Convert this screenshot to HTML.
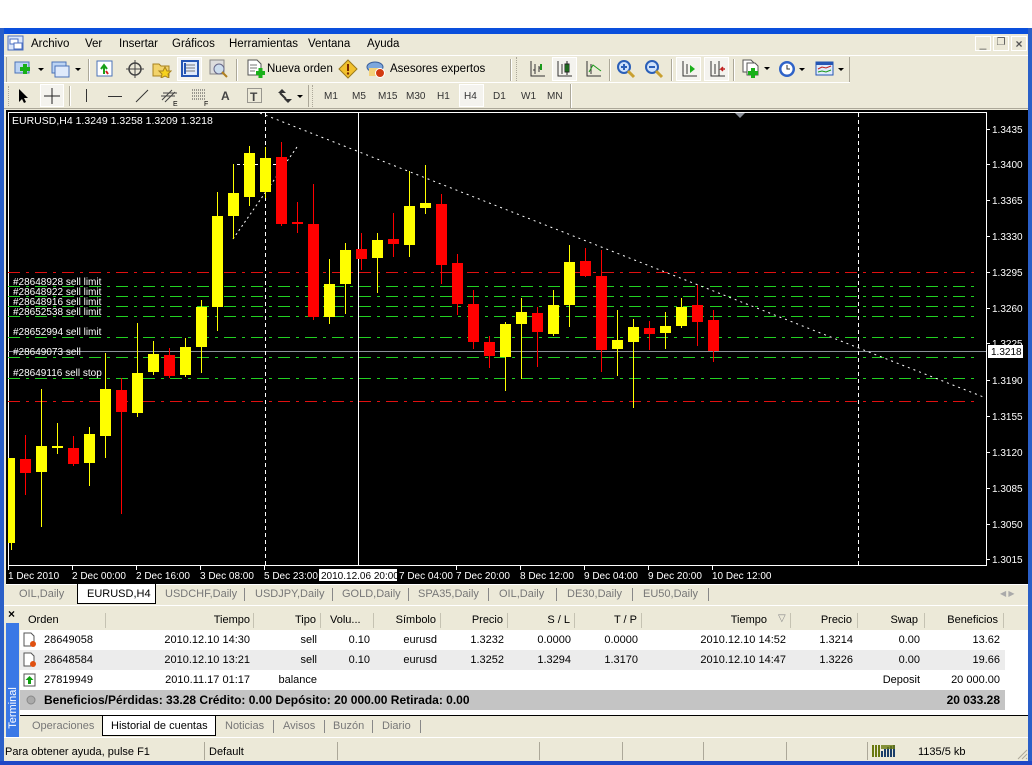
<!DOCTYPE html>
<html><head><meta charset="utf-8">
<style>
*{margin:0;padding:0;box-sizing:border-box}
body{width:1032px;height:765px;background:#fff;position:relative;overflow:hidden;font-family:"Liberation Sans","DejaVu Sans",sans-serif;font-size:11px;color:#000}
.a{position:absolute}
.bar{background:#ece9d8}
.t{position:absolute;white-space:nowrap}
.sep{position:absolute;width:2px;border-left:1px solid #aca899;border-right:1px solid #fff}
.r{text-align:right}
</style></head><body>
<!-- window frame -->
<div class="a" style="left:0;top:28px;width:1032px;height:6px;background:#0a4fdc"></div>
<div class="a" style="left:0;top:28px;width:4px;height:737px;background:#2a5fc8"></div>
<div class="a" style="left:1028px;top:28px;width:4px;height:737px;background:#2a5fc8"></div>
<div class="a" style="left:0;top:761px;width:1032px;height:4px;background:#1f47c6"></div>
<div class="a bar" style="left:4px;top:34px;width:1024px;height:727px"></div>

<!-- menu -->
<svg class="a" style="left:7px;top:35px" width="18" height="17"><rect x="1" y="1" width="15" height="14" fill="#dbe7fb" stroke="#4a6ec0"/><rect x="3" y="4" width="8" height="5" fill="#fff" stroke="#4a6ec0"/><rect x="7" y="8" width="8" height="6" fill="#fff" stroke="#4a6ec0"/></svg>
<div class="t" style="left:31px;top:38px;font-size:11.5px">Archivo</div>
<div class="t" style="left:85px;top:38px;font-size:11.5px">Ver</div>
<div class="t" style="left:119px;top:38px;font-size:11.5px">Insertar</div>
<div class="t" style="left:172px;top:38px;font-size:11.5px">Gráficos</div>
<div class="t" style="left:229px;top:38px;font-size:11.5px">Herramientas</div>
<div class="t" style="left:308px;top:38px;font-size:11.5px">Ventana</div>
<div class="t" style="left:367px;top:38px;font-size:11.5px">Ayuda</div>
<div class="a" style="left:975px;top:36px;width:16px;height:15px;border:1px solid #fff;font-size:12px;text-align:center;line-height:12px;color:#555">_</div>
<div class="a" style="left:993px;top:36px;width:16px;height:15px;border:1px solid #fff;font-size:10px;text-align:center;color:#555">❐</div>
<div class="a" style="left:1011px;top:36px;width:16px;height:15px;border:1px solid #fff;font-size:12px;text-align:center;line-height:14px;color:#555;font-weight:bold">×</div>
<div class="a" style="left:4px;top:55px;width:1024px;height:1px;background:#fff"></div>

<!-- toolbar row 1 -->
<div class="a" style="left:6px;top:57px;width:1px;height:25px;background:#aca899"></div>
<svg class="a" style="left:14px;top:60px" width="30" height="20"><rect x="1" y="2" width="14" height="11" fill="#bcd4f4" stroke="#4b73b9"/><path d="M6 9h10M11 4v10" stroke="#19b019" stroke-width="4"/><path d="M24 8l3 3 3-3z" fill="#000"/></svg>
<svg class="a" style="left:51px;top:60px" width="30" height="20"><rect x="1" y="2" width="14" height="11" fill="#bcd4f4" stroke="#4b73b9"/><rect x="4" y="6" width="14" height="11" fill="#dfeafb" stroke="#4b73b9"/><path d="M24 8l3 3 3-3z" fill="#000"/></svg>
<div class="sep" style="left:88px;top:59px;height:22px"></div>
<svg class="a" style="left:96px;top:60px" width="18" height="18"><rect x="1" y="1" width="15" height="15" fill="#fff" stroke="#4b73b9"/><path d="M5 9l3-4 3 4M8 6v8" stroke="#19a019" stroke-width="2" fill="none"/><path d="M10 11l2 3" stroke="#d02020" stroke-width="2"/></svg>
<svg class="a" style="left:126px;top:60px" width="18" height="18"><circle cx="9" cy="9" r="6" fill="none" stroke="#444" stroke-width="1.5"/><path d="M9 0v18M0 9h18" stroke="#444"/></svg>
<svg class="a" style="left:152px;top:59px" width="20" height="19"><path d="M1 5h6l2 2h8v10H1z" fill="#f2d36b" stroke="#a8821e"/><path d="M13 8l2 4 4 0-3 3 1 4-4-2-4 2 1-4-3-3h4z" fill="#f6d21c" stroke="#a8821e"/></svg>
<div class="a" style="left:177px;top:57px;width:25px;height:24px;border:1px solid #fff;background:#f4f3ee"></div>
<svg class="a" style="left:181px;top:60px" width="18" height="18"><rect x="1" y="1" width="16" height="15" fill="#dfeafb" stroke="#2455b4" stroke-width="2"/><path d="M5 5h9M5 8h9M5 11h9" stroke="#777"/><rect x="3" y="3" width="2" height="11" fill="#2455b4"/></svg>
<svg class="a" style="left:209px;top:59px" width="20" height="20"><rect x="1" y="1" width="14" height="14" fill="#ddd" stroke="#888"/><circle cx="10" cy="10" r="5" fill="#cde" stroke="#668"/><path d="M13 13l5 5" stroke="#b08020" stroke-width="2"/></svg>
<div class="sep" style="left:236px;top:59px;height:22px"></div>
<svg class="a" style="left:246px;top:59px" width="20" height="21"><path d="M2 1h9l4 4v11H2z" fill="#fff" stroke="#555"/><path d="M4 6h7M4 9h7M4 12h5" stroke="#777"/><path d="M10 14h9M14.5 9v10" stroke="#19b019" stroke-width="4"/></svg>
<div class="t" style="left:267px;top:63px;font-size:11.5px">Nueva orden</div>
<svg class="a" style="left:338px;top:59px" width="20" height="20"><path d="M10 1l9 9-9 9-9-9z" fill="#f2c12e" stroke="#9b7a18"/><path d="M10 5v7" stroke="#7a2a00" stroke-width="2"/><circle cx="10" cy="14.5" r="1.2" fill="#7a2a00"/></svg>
<svg class="a" style="left:366px;top:59px" width="20" height="20"><ellipse cx="9" cy="8" rx="8" ry="5" fill="#7da7dc" stroke="#3a5e9a"/><rect x="3" y="9" width="12" height="8" fill="#f3d27a"/><circle cx="14" cy="14" r="4.5" fill="#d23a10" stroke="#fff"/></svg>
<div class="t" style="left:390px;top:63px;font-size:11.5px">Asesores expertos</div>
<div class="sep" style="left:510px;top:59px;height:22px"></div>
<div class="a" style="left:516px;top:57px;width:2px;height:24px;border-left:1px dotted #aca899"></div>
<svg class="a" style="left:528px;top:60px" width="18" height="18"><path d="M3 1v15h14M7 4v10M11 6v6M11 8h3M7 10h-2" stroke="#333" fill="none"/><path d="M13 4v6" stroke="#1a9a1a" stroke-width="2"/></svg>
<div class="a" style="left:552px;top:57px;width:25px;height:24px;border:1px solid #fff;background:#f4f3ee"></div>
<svg class="a" style="left:555px;top:60px" width="18" height="18"><path d="M3 1v15h14M7 4v10" stroke="#333" fill="none"/><rect x="10" y="4" width="4" height="8" fill="#1cb01c" stroke="#222"/><path d="M12 1v14" stroke="#222"/></svg>
<svg class="a" style="left:584px;top:60px" width="18" height="18"><path d="M3 1v15h14M7 4v10" stroke="#333" fill="none"/><path d="M5 12l4-7 4 3 4 3" stroke="#1a9a1a" fill="none"/></svg>
<div class="sep" style="left:609px;top:59px;height:22px"></div>
<svg class="a" style="left:616px;top:59px" width="20" height="20"><circle cx="8" cy="8" r="6" fill="#cfe2fb" stroke="#2a5fb8" stroke-width="2"/><path d="M5 8h6M8 5v6" stroke="#2a5fb8" stroke-width="2"/><path d="M12 12l6 6" stroke="#c9a030" stroke-width="3"/></svg>
<svg class="a" style="left:644px;top:59px" width="20" height="20"><circle cx="8" cy="8" r="6" fill="#cfe2fb" stroke="#2a5fb8" stroke-width="2"/><path d="M5 8h6" stroke="#2a5fb8" stroke-width="2"/><path d="M12 12l6 6" stroke="#c9a030" stroke-width="3"/></svg>
<div class="sep" style="left:671px;top:59px;height:22px"></div>
<div class="a" style="left:676px;top:57px;width:25px;height:24px;border:1px solid #fff;background:#f4f3ee"></div>
<svg class="a" style="left:680px;top:60px" width="18" height="18"><path d="M3 1v15h14M7 4v10" stroke="#333" fill="none"/><path d="M10 5l5 4-5 4z" fill="#1cb01c"/></svg>
<div class="a" style="left:704px;top:57px;width:25px;height:24px;border:1px solid #fff;background:#f4f3ee"></div>
<svg class="a" style="left:708px;top:60px" width="18" height="18"><path d="M3 1v15h14M7 4v10M11 1v15" stroke="#333" fill="none"/><path d="M17 9h-4l2-2M13 9l2 2" stroke="#c02020" stroke-width="1.5" fill="none"/></svg>
<div class="sep" style="left:733px;top:59px;height:22px"></div>
<svg class="a" style="left:741px;top:59px" width="30" height="21"><path d="M2 1h8l3 3v9H2z" fill="#fff" stroke="#555"/><path d="M6 4h8l3 3v9H6z" fill="#fff" stroke="#555"/><path d="M7 14h10M12 9v10" stroke="#19b019" stroke-width="4"/><path d="M23 8l3 3 3-3z" fill="#000"/></svg>
<svg class="a" style="left:778px;top:59px" width="30" height="20"><circle cx="9" cy="10" r="8" fill="#2f63c8"/><circle cx="9" cy="10" r="5.5" fill="#fff"/><path d="M9 6v4h3" stroke="#333" fill="none"/><path d="M21 9l3 3 3-3z" fill="#000"/></svg>
<svg class="a" style="left:815px;top:59px" width="30" height="20"><rect x="1" y="3" width="17" height="13" fill="#dfeafb" stroke="#2455b4"/><rect x="1" y="3" width="17" height="3" fill="#2455b4"/><path d="M3 10l4-2 4 1 5-2" stroke="#c02020" fill="none"/><path d="M3 13l4-1 4 1 5-2" stroke="#1a9a1a" fill="none"/><path d="M23 9l3 3 3-3z" fill="#000"/></svg>
<div class="a" style="left:849px;top:57px;width:1px;height:26px;background:#aca899"></div>
<div class="a" style="left:4px;top:82px;width:846px;height:1px;background:#fff"></div>

<!-- toolbar row 2 -->
<div class="a" style="left:8px;top:86px;width:2px;height:20px;border-left:1px dotted #aca899"></div>
<svg class="a" style="left:16px;top:88px" width="14" height="16"><path d="M3 1v13l3-3 2 4 2-1-2-4h4z" fill="#000"/></svg>
<div class="a" style="left:40px;top:84px;width:24px;height:23px;border:1px solid #fff;background:#f4f3ee"></div>
<svg class="a" style="left:42px;top:86px" width="20" height="20"><path d="M10 2v16M2 10h16" stroke="#222"/></svg>
<div class="sep" style="left:69px;top:86px;height:20px"></div>
<div class="a" style="left:86px;top:89px;width:1px;height:13px;background:#333"></div>
<div class="a" style="left:108px;top:96px;width:14px;height:1px;background:#333"></div>
<svg class="a" style="left:134px;top:88px" width="16" height="16"><path d="M2 14L14 2" stroke="#333"/></svg>
<svg class="a" style="left:160px;top:87px" width="20" height="20"><path d="M2 13l10-10M5 15l10-10M1 9h14M3 6h14" stroke="#444"/><text x="13" y="19" font-size="7" font-family="Liberation Sans">E</text></svg>
<svg class="a" style="left:191px;top:87px" width="20" height="20"><path d="M1 3h14M1 6h14M1 9h14M1 12h14" stroke="#444" stroke-dasharray="1,1"/><text x="13" y="19" font-size="7" font-family="Liberation Sans">F</text></svg>
<div class="t" style="left:221px;top:89px;font-size:12px;font-weight:bold;color:#444">A</div>
<svg class="a" style="left:246px;top:87px" width="18" height="18"><rect x="1.5" y="1.5" width="14" height="14" fill="none" stroke="#444" stroke-dasharray="1,1"/><text x="4" y="14" font-size="12" font-weight="bold" font-family="Liberation Sans" fill="#444">T</text></svg>
<svg class="a" style="left:276px;top:88px" width="28" height="16"><path d="M2 5l4-4 4 4zM8 11l4 4 4-4z" fill="#333"/><path d="M4 5l6 6" stroke="#333" stroke-width="2"/><path d="M21 7l3 3 3-3z" fill="#000"/></svg>
<div class="a" style="left:308px;top:85px;width:2px;height:22px;border-left:1px solid #aca899"></div>
<div class="a" style="left:312px;top:85px;width:2px;height:22px;border-left:1px dotted #aca899"></div>
<div class="t" style="left:324px;top:91px;font-size:10px;color:#333">M1</div>
<div class="t" style="left:352px;top:91px;font-size:10px;color:#333">M5</div>
<div class="t" style="left:378px;top:91px;font-size:10px;color:#333">M15</div>
<div class="t" style="left:406px;top:91px;font-size:10px;color:#333">M30</div>
<div class="t" style="left:437px;top:91px;font-size:10px;color:#333">H1</div>
<div class="a" style="left:459px;top:84px;width:25px;height:23px;border:1px solid #fff;background:#f4f3ee"></div>
<div class="t" style="left:464px;top:91px;font-size:10px;color:#333">H4</div>
<div class="t" style="left:493px;top:91px;font-size:10px;color:#333">D1</div>
<div class="t" style="left:521px;top:91px;font-size:10px;color:#333">W1</div>
<div class="t" style="left:547px;top:91px;font-size:10px;color:#333">MN</div>
<div class="a" style="left:570px;top:84px;width:2px;height:24px;border-left:1px solid #aca899;border-right:1px solid #fff"></div>
<div class="a" style="left:4px;top:108px;width:1024px;height:1px;background:#aca899"></div>

<!-- chart -->
<svg class="a" style="left:6px;top:110px" width="1022" height="474" viewBox="6 110 1022 474" font-family="Liberation Sans, sans-serif">
<rect x="6" y="110" width="1022" height="474" fill="#000"/>
<rect x="8.5" y="112.5" width="978" height="453" fill="none" stroke="#fff"/>
<g stroke-width="1" fill="none">
<path d="M8 272.5H980" stroke="#e01010" stroke-dasharray="12,6,3,6"/>
<path d="M8 401.5H980" stroke="#e01010" stroke-dasharray="12,6,3,6"/>
<path d="M8 286.5H980M8 296.5H980M8 306.5H980M8 316.5H980M8 337.5H980M8 357.5H980M8 378.5H980" stroke="#22d022" stroke-dasharray="12,6,3,6"/>
<path d="M8 351.5H986" stroke="#8a8f98"/>
<path d="M265.5 113V565M858.5 113V565" stroke="#fff" stroke-dasharray="4,3"/>
<path d="M358.5 112V565" stroke="#fff"/>
<path d="M260 113L986 398" stroke="#fff" stroke-dasharray="2,4"/>
<path d="M233.5 239V164.5H285" stroke="#fff" stroke-dasharray="3,3"/>
<path d="M233 239L297 147" stroke="#fff" stroke-dasharray="2,3"/>
</g>
<path d="M735 113h10l-5 5z" fill="#8a8f98"/>
<g fill="#ffff00">
<rect x="8" y="458" width="7" height="85"/><rect x="11" y="543" width="1" height="7"/>
<rect x="41" y="389" width="1" height="138"/><rect x="36" y="446" width="11" height="26"/>
<rect x="57" y="423" width="1" height="31"/><rect x="52" y="446" width="11" height="2"/>
<rect x="89" y="427" width="1" height="59"/><rect x="84" y="434" width="11" height="29"/>
<rect x="105" y="353" width="1" height="105"/><rect x="100" y="389" width="11" height="47"/>
<rect x="137" y="323" width="1" height="94"/><rect x="132" y="373" width="11" height="40"/>
<rect x="153" y="341" width="1" height="34"/><rect x="148" y="354" width="11" height="18"/>
<rect x="185" y="338" width="1" height="39"/><rect x="180" y="347" width="11" height="28"/>
<rect x="201" y="300" width="1" height="73"/><rect x="196" y="307" width="11" height="40"/>
<rect x="217" y="192" width="1" height="139"/><rect x="212" y="216" width="11" height="91"/>
<rect x="233" y="164" width="1" height="75"/><rect x="228" y="193" width="11" height="23"/>
<rect x="249" y="146" width="1" height="60"/><rect x="244" y="153" width="11" height="44"/>
<rect x="265" y="147" width="1" height="51"/><rect x="260" y="158" width="11" height="34"/>
<rect x="329" y="259" width="1" height="65"/><rect x="324" y="284" width="11" height="33"/>
<rect x="345" y="243" width="1" height="71"/><rect x="340" y="250" width="11" height="34"/>
<rect x="377" y="233" width="1" height="60"/><rect x="372" y="240" width="11" height="18"/>
<rect x="409" y="171" width="1" height="86"/><rect x="404" y="206" width="11" height="39"/>
<rect x="425" y="165" width="1" height="49"/><rect x="420" y="203" width="11" height="5"/>
<rect x="505" y="322" width="1" height="69"/><rect x="500" y="324" width="11" height="33"/>
<rect x="521" y="298" width="1" height="81"/><rect x="516" y="312" width="11" height="12"/>
<rect x="553" y="290" width="1" height="46"/><rect x="548" y="305" width="11" height="29"/>
<rect x="569" y="245" width="1" height="82"/><rect x="564" y="262" width="11" height="43"/>
<rect x="617" y="310" width="1" height="66"/><rect x="612" y="340" width="11" height="9"/>
<rect x="633" y="319" width="1" height="89"/><rect x="628" y="327" width="11" height="15"/>
<rect x="665" y="312" width="1" height="37"/><rect x="660" y="326" width="11" height="7"/>
<rect x="681" y="298" width="1" height="30"/><rect x="676" y="307" width="11" height="19"/>
</g>
<g fill="#ff0000">
<rect x="25" y="435" width="1" height="60"/><rect x="20" y="459" width="11" height="14"/>
<rect x="73" y="436" width="1" height="30"/><rect x="68" y="448" width="11" height="16"/>
<rect x="121" y="378" width="1" height="136"/><rect x="116" y="390" width="11" height="22"/>
<rect x="169" y="348" width="1" height="30"/><rect x="164" y="355" width="11" height="21"/>
<rect x="281" y="142" width="1" height="84"/><rect x="276" y="157" width="11" height="67"/>
<rect x="297" y="202" width="1" height="31"/><rect x="292" y="222" width="11" height="2"/>
<rect x="313" y="184" width="1" height="136"/><rect x="308" y="224" width="11" height="93"/>
<rect x="361" y="233" width="1" height="37"/><rect x="356" y="249" width="11" height="10"/>
<rect x="393" y="213" width="1" height="44"/><rect x="388" y="239" width="11" height="5"/>
<rect x="441" y="194" width="1" height="90"/><rect x="436" y="204" width="11" height="61"/>
<rect x="457" y="254" width="1" height="61"/><rect x="452" y="263" width="11" height="41"/>
<rect x="473" y="290" width="1" height="59"/><rect x="468" y="304" width="11" height="38"/>
<rect x="489" y="336" width="1" height="32"/><rect x="484" y="342" width="11" height="14"/>
<rect x="537" y="307" width="1" height="60"/><rect x="532" y="313" width="11" height="19"/>
<rect x="585" y="248" width="1" height="29"/><rect x="580" y="261" width="11" height="15"/>
<rect x="601" y="250" width="1" height="122"/><rect x="596" y="276" width="11" height="74"/>
<rect x="649" y="321" width="1" height="29"/><rect x="644" y="328" width="11" height="6"/>
<rect x="697" y="285" width="1" height="61"/><rect x="692" y="305" width="11" height="17"/>
<rect x="713" y="310" width="1" height="52"/><rect x="708" y="320" width="11" height="31"/>
</g>
<g fill="#fff" font-size="10">
<text x="12" y="124" font-size="10.5">EURUSD,H4  1.3249 1.3258 1.3209 1.3218</text>
<text x="13" y="285">#28648928 sell limit</text>
<text x="13" y="295">#28648922 sell limit</text>
<text x="13" y="305">#28648916 sell limit</text>
<text x="13" y="315">#28652538 sell limit</text>
<text x="13" y="335">#28652994 sell limit</text>
<text x="13" y="355">#28649073 sell</text>
<text x="13" y="376">#28649116 sell stop</text>
</g>
<g fill="#fff" font-size="10">
<path d="M986 129.5h4M986 164.5h4M986 200.5h4M986 236.5h4M986 272.5h4M986 308.5h4M986 343.5h4M986 380.5h4M986 416.5h4M986 452.5h4M986 488.5h4M986 524.5h4M986 559.5h4" stroke="#fff"/>
<text x="992" y="133">1.3435</text><text x="992" y="168">1.3400</text><text x="992" y="204">1.3365</text>
<text x="992" y="240">1.3330</text><text x="992" y="276">1.3295</text><text x="992" y="312">1.3260</text>
<text x="992" y="347">1.3225</text><text x="992" y="384">1.3190</text><text x="992" y="420">1.3155</text>
<text x="992" y="456">1.3120</text><text x="992" y="492">1.3085</text><text x="992" y="528">1.3050</text>
<text x="992" y="563">1.3015</text>
<rect x="988" y="345" width="35" height="13" fill="#fff"/>
<text x="991" y="355" fill="#000">1.3218</text>
<path d="M8.5 566v4M72.5 566v4M136.5 566v4M200.5 566v4M264.5 566v4M456.5 566v4M520.5 566v4M584.5 566v4M648.5 566v4M712.5 566v4" stroke="#fff"/>
<text x="8" y="579">1 Dec 2010</text><text x="72" y="579">2 Dec 00:00</text><text x="136" y="579">2 Dec 16:00</text>
<text x="200" y="579">3 Dec 08:00</text><text x="264" y="579">5 Dec 23:00</text>
<rect x="319" y="569" width="78" height="12" fill="#fff"/><text x="321" y="579" fill="#000">2010.12.06 20:00</text>
<text x="399" y="579">7 Dec 04:00</text><text x="456" y="579">7 Dec 20:00</text><text x="520" y="579">8 Dec 12:00</text>
<text x="584" y="579">9 Dec 04:00</text><text x="648" y="579">9 Dec 20:00</text><text x="712" y="579">10 Dec 12:00</text>
</g>
</svg>

<!-- chart tabs -->
<div class="a" style="left:6px;top:584px;width:1022px;height:20px;background:#ece9d8;border-top:1px solid #fff"></div>
<div class="a" style="left:77px;top:584px;width:79px;height:20px;background:#fff;border:1px solid #000;border-top:none"></div>
<div class="t" style="left:19px;top:588px;color:#777;font-size:11px">OIL,Daily</div>
<div class="t" style="left:87px;top:588px;font-size:11px">EURUSD,H4</div>
<div class="t" style="left:165px;top:588px;color:#777;font-size:11px">USDCHF,Daily</div>
<div class="t" style="left:255px;top:588px;color:#777;font-size:11px">USDJPY,Daily</div>
<div class="t" style="left:342px;top:588px;color:#777;font-size:11px">GOLD,Daily</div>
<div class="t" style="left:418px;top:588px;color:#777;font-size:11px">SPA35,Daily</div>
<div class="t" style="left:499px;top:588px;color:#777;font-size:11px">OIL,Daily</div>
<div class="t" style="left:567px;top:588px;color:#777;font-size:11px">DE30,Daily</div>
<div class="t" style="left:643px;top:588px;color:#777;font-size:11px">EU50,Daily</div>
<div class="a" style="left:244px;top:588px;width:1px;height:13px;background:#888"></div>
<div class="a" style="left:332px;top:588px;width:1px;height:13px;background:#888"></div>
<div class="a" style="left:408px;top:588px;width:1px;height:13px;background:#888"></div>
<div class="a" style="left:488px;top:588px;width:1px;height:13px;background:#888"></div>
<div class="a" style="left:556px;top:588px;width:1px;height:13px;background:#888"></div>
<div class="a" style="left:632px;top:588px;width:1px;height:13px;background:#888"></div>
<div class="a" style="left:708px;top:588px;width:1px;height:13px;background:#888"></div>
<div class="t" style="left:1000px;top:589px;color:#aaa;font-size:8px">◀ ▶</div>
<div class="a" style="left:4px;top:605px;width:1024px;height:1px;background:#fff"></div>

<!-- terminal -->
<div class="t" style="left:8px;top:607px;font-size:12px;font-weight:bold">×</div>
<div class="a" style="left:6px;top:623px;width:13px;height:114px;background:#3a78e6"></div>
<div class="t" style="left:-14px;top:702px;color:#fff;font-size:11px;transform:rotate(-90deg);transform-origin:center;width:54px;text-align:center">Terminal</div>
<div class="a" style="left:20px;top:610px;width:1008px;height:20px;background:#ece9d8"></div>
<div class="t" style="left:28px;top:614px;font-size:11px">Orden</div>
<div class="t r" style="left:150px;width:100px;top:614px">Tiempo</div>
<div class="t r" style="left:266px;width:50px;top:614px">Tipo</div>
<div class="t" style="left:330px;top:614px">Volu...</div>
<div class="t r" style="left:386px;width:50px;top:614px">Símbolo</div>
<div class="t r" style="left:453px;width:50px;top:614px">Precio</div>
<div class="t r" style="left:520px;width:50px;top:614px">S / L</div>
<div class="t r" style="left:587px;width:50px;top:614px">T / P</div>
<div class="t r" style="left:717px;width:50px;top:614px">Tiempo</div>
<div class="t" style="left:778px;top:613px;color:#888;font-size:10px">▽</div>
<div class="t r" style="left:802px;width:50px;top:614px">Precio</div>
<div class="t r" style="left:868px;width:50px;top:614px">Swap</div>
<div class="t r" style="left:938px;width:60px;top:614px">Beneficios</div>
<div class="a" style="left:105px;top:613px;width:1px;height:15px;background:#c5c2b2"></div>
<div class="a" style="left:253px;top:613px;width:1px;height:15px;background:#c5c2b2"></div>
<div class="a" style="left:320px;top:613px;width:1px;height:15px;background:#c5c2b2"></div>
<div class="a" style="left:373px;top:613px;width:1px;height:15px;background:#c5c2b2"></div>
<div class="a" style="left:440px;top:613px;width:1px;height:15px;background:#c5c2b2"></div>
<div class="a" style="left:507px;top:613px;width:1px;height:15px;background:#c5c2b2"></div>
<div class="a" style="left:574px;top:613px;width:1px;height:15px;background:#c5c2b2"></div>
<div class="a" style="left:641px;top:613px;width:1px;height:15px;background:#c5c2b2"></div>
<div class="a" style="left:790px;top:613px;width:1px;height:15px;background:#c5c2b2"></div>
<div class="a" style="left:857px;top:613px;width:1px;height:15px;background:#c5c2b2"></div>
<div class="a" style="left:924px;top:613px;width:1px;height:15px;background:#c5c2b2"></div>
<div class="a" style="left:1003px;top:613px;width:1px;height:15px;background:#c5c2b2"></div>

<div class="a" style="left:20px;top:630px;width:1008px;height:86px;background:#fff"></div>
<div class="a" style="left:20px;top:650px;width:985px;height:20px;background:#ececec"></div>
<div class="a" style="left:20px;top:690px;width:985px;height:20px;background:#c4c4c4"></div>
<div class="a" style="left:20px;top:715px;width:1008px;height:1px;background:#000"></div>

<svg class="a" style="left:23px;top:632px" width="14" height="16"><path d="M1 1h7l3 3v10H1z" fill="#fff" stroke="#555"/><circle cx="10" cy="12" r="3" fill="#e05010"/></svg>
<svg class="a" style="left:23px;top:652px" width="14" height="16"><path d="M1 1h7l3 3v10H1z" fill="#fff" stroke="#555"/><circle cx="10" cy="12" r="3" fill="#e05010"/></svg>
<svg class="a" style="left:23px;top:672px" width="14" height="16"><rect x="1" y="2" width="11" height="12" fill="#fff" stroke="#555"/><path d="M6.5 4l4 4h-2.5v4h-3v-4h-2.5z" fill="#10a010"/></svg>
<svg class="a" style="left:26px;top:695px" width="10" height="10"><circle cx="5" cy="5" r="4" fill="#aaa" stroke="#888"/></svg>

<div class="t" style="left:44px;top:634px">28649058</div>
<div class="t r" style="left:150px;width:100px;top:634px">2010.12.10 14:30</div>
<div class="t r" style="left:266px;width:51px;top:634px">sell</div>
<div class="t r" style="left:320px;width:50px;top:634px">0.10</div>
<div class="t r" style="left:387px;width:50px;top:634px">eurusd</div>
<div class="t r" style="left:454px;width:50px;top:634px">1.3232</div>
<div class="t r" style="left:521px;width:50px;top:634px">0.0000</div>
<div class="t r" style="left:588px;width:50px;top:634px">0.0000</div>
<div class="t r" style="left:686px;width:100px;top:634px">2010.12.10 14:52</div>
<div class="t r" style="left:803px;width:50px;top:634px">1.3214</div>
<div class="t r" style="left:870px;width:50px;top:634px">0.00</div>
<div class="t r" style="left:940px;width:60px;top:634px">13.62</div>

<div class="t" style="left:44px;top:654px">28648584</div>
<div class="t r" style="left:150px;width:100px;top:654px">2010.12.10 13:21</div>
<div class="t r" style="left:266px;width:51px;top:654px">sell</div>
<div class="t r" style="left:320px;width:50px;top:654px">0.10</div>
<div class="t r" style="left:387px;width:50px;top:654px">eurusd</div>
<div class="t r" style="left:454px;width:50px;top:654px">1.3252</div>
<div class="t r" style="left:521px;width:50px;top:654px">1.3294</div>
<div class="t r" style="left:588px;width:50px;top:654px">1.3170</div>
<div class="t r" style="left:686px;width:100px;top:654px">2010.12.10 14:47</div>
<div class="t r" style="left:803px;width:50px;top:654px">1.3226</div>
<div class="t r" style="left:870px;width:50px;top:654px">0.00</div>
<div class="t r" style="left:940px;width:60px;top:654px">19.66</div>

<div class="t" style="left:44px;top:674px">27819949</div>
<div class="t r" style="left:150px;width:100px;top:674px">2010.11.17 01:17</div>
<div class="t r" style="left:266px;width:51px;top:674px">balance</div>
<div class="t r" style="left:860px;width:60px;top:674px">Deposit</div>
<div class="t r" style="left:920px;width:80px;top:674px">20 000.00</div>

<div class="t" style="left:44px;top:693px;font-weight:bold;font-size:12px">Beneficios/Pérdidas: 33.28  Crédito: 0.00  Depósito: 20 000.00  Retirada: 0.00</div>
<div class="t r" style="left:900px;width:100px;top:693px;font-weight:bold;font-size:12px">20 033.28</div>

<!-- bottom tabs -->
<div class="a" style="left:102px;top:716px;width:114px;height:20px;background:#fff;border:1px solid #000;border-top:none"></div>
<div class="t" style="left:32px;top:720px;color:#777">Operaciones</div>
<div class="t" style="left:111px;top:720px">Historial de cuentas</div>
<div class="t" style="left:225px;top:720px;color:#777">Noticias</div>
<div class="t" style="left:283px;top:720px;color:#777">Avisos</div>
<div class="t" style="left:333px;top:720px;color:#777">Buzón</div>
<div class="t" style="left:382px;top:720px;color:#777">Diario</div>
<div class="a" style="left:273px;top:720px;width:1px;height:13px;background:#888"></div>
<div class="a" style="left:324px;top:720px;width:1px;height:13px;background:#888"></div>
<div class="a" style="left:372px;top:720px;width:1px;height:13px;background:#888"></div>
<div class="a" style="left:420px;top:720px;width:1px;height:13px;background:#888"></div>
<div class="a" style="left:4px;top:737px;width:1024px;height:1px;background:#fff"></div>

<!-- status bar -->
<div class="t" style="left:5px;top:746px">Para obtener ayuda, pulse F1</div>
<div class="t" style="left:209px;top:746px">Default</div>
<div class="a" style="left:204px;top:742px;width:1px;height:18px;background:#aca899"></div>
<div class="a" style="left:337px;top:742px;width:1px;height:18px;background:#aca899"></div>
<div class="a" style="left:539px;top:742px;width:1px;height:18px;background:#aca899"></div>
<div class="a" style="left:622px;top:742px;width:1px;height:18px;background:#aca899"></div>
<div class="a" style="left:703px;top:742px;width:1px;height:18px;background:#aca899"></div>
<div class="a" style="left:786px;top:742px;width:1px;height:18px;background:#aca899"></div>
<div class="a" style="left:867px;top:742px;width:1px;height:18px;background:#aca899"></div>
<svg class="a" style="left:872px;top:744px" width="24" height="14"><g fill="#6a7a10"><rect x="0" y="1" width="2" height="12"/><rect x="3" y="1" width="2" height="12"/><rect x="6" y="1" width="2" height="12"/></g><g fill="#1a3e6a"><rect x="9" y="7" width="2" height="6"/><rect x="12" y="5" width="2" height="8"/><rect x="15" y="3" width="2" height="10"/><rect x="18" y="2" width="2" height="11"/><rect x="21" y="1" width="2" height="12"/></g><rect x="9" y="1" width="14" height="4" fill="#6a7a10" opacity=".8"/></svg>
<div class="t" style="left:918px;top:746px">1135/5 kb</div>
<svg class="a" style="left:1016px;top:748px" width="12" height="12"><path d="M11 2L2 11M11 6L6 11M11 10L10 11" stroke="#aca899"/></svg>
</body></html>
